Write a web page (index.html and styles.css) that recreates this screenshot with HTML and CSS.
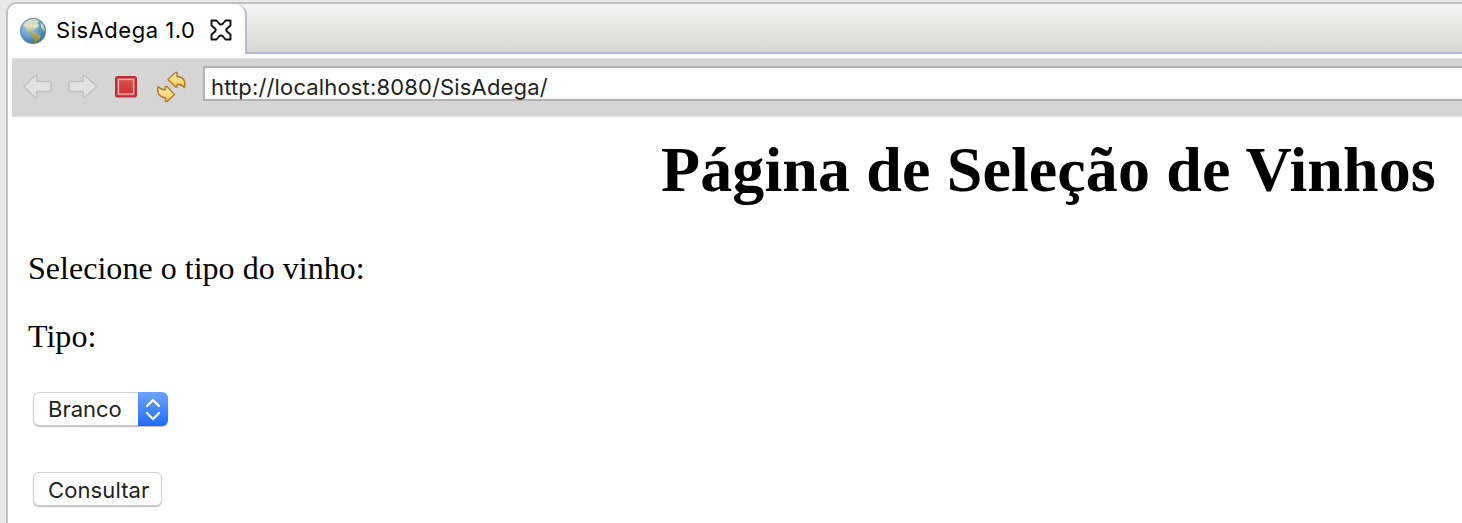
FILE: index.html
```
<!DOCTYPE html>
<html lang="pt-BR">
<head>
<meta charset="utf-8">
<title>SisAdega 1.0</title>
<link rel="stylesheet" href="styles.css">
</head>
<body>
<div class="window">
  <div class="tabs">
    <div class="tab">
      <svg class="globe" width="28" height="28" viewBox="0 0 28 28">
        <defs>
          <radialGradient id="sea" cx=".35" cy=".3" r=".75"><stop offset="0" stop-color="#b3d2e3"/><stop offset=".6" stop-color="#609cca"/><stop offset="1" stop-color="#38699c"/></radialGradient>
          <linearGradient id="land" x1="0" y1="0" x2="0" y2="1"><stop offset="0" stop-color="#d0d3b4"/><stop offset=".3" stop-color="#e4e5c8"/><stop offset=".55" stop-color="#b4b472"/><stop offset="1" stop-color="#877c35"/></linearGradient>
        </defs>
        <circle cx="14" cy="14" r="12.7" fill="url(#sea)" stroke="#557ea5" stroke-width=".7"/>
        <path d="M5.500 6C8 3 12 1.500 16 2L20 4 18 6 20 8 18 11 15 12 14.500 14 12 13 11 14 13 16 15 15 19 17 22 19 21 22 18 24 17 26 15 26 15 22 12 19 12 17 9 14 7 10 4.500 9ZM21 5L24 8 26 13 25 14 23 12 22 8Z" fill="url(#land)"/>
      </svg>
      <span class="tab-title">SisAdega 1.0</span>
      <svg class="close" width="22" height="22" viewBox="0 0 22 22"><path d="M1.500 1.500H6.500L9 4.500Q11 6.500 13 4.500L15.500 1.500H20.500V6.500L17 9.500Q15.500 11 17 12.500L20.500 15.500V20.500H15.500L13 17.500Q11 15.500 9 17.500L6.500 20.500H1.500V15.500L5 12.500Q6.500 11 5 9.500L1.500 6.500Z" fill="#fff" stroke="#111" stroke-width="1.900" stroke-linejoin="round"/></svg>
    </div>
    <div class="tab-rest"></div>
  </div>
  <div class="toolbar">
    <svg class="tools" width="191" height="59" viewBox="12 58 191 59">
      <defs>
        <linearGradient id="gold" x1="0" y1="0" x2="0" y2="1"><stop offset="0" stop-color="#fff1b8"/><stop offset="1" stop-color="#f5c653"/></linearGradient>
        <linearGradient id="red" x1="0" y1="0" x2="0" y2="1"><stop offset="0" stop-color="#d9504f"/><stop offset="1" stop-color="#ca3337"/></linearGradient>
      </defs>
      <g fill="#e1e1e1" stroke="#c2c2c2" stroke-width="1.6" stroke-linejoin="round">
        <path d="M24 86.5L35 75.5H37V81.5H50Q51 81.5 51 82.5V90.5Q51 91.5 50 91.5H37V97.5H35Z"/>
        <path d="M96.500 86.500L85 75.500H83V81.500H70Q69 81.500 69 82.500V90.500Q69 91.500 70 91.500H83V97.500H85Z"/>
      </g>
      <rect x="116" y="77" width="20" height="19.500" rx="1.800" fill="#d8595c" stroke="#b92d34" stroke-width="2"/>
      <rect x="118.500" y="79.500" width="15" height="14.500" fill="url(#red)" stroke="#f0b4b3" stroke-width="1.200"/>
      <g fill="url(#gold)" stroke="#b57f2e" stroke-width="1.500" stroke-linejoin="round">
        <path d="M168 79.500L175.500 72.500H177V76.500C183 77 186 80.500 184.500 87.500C182.500 85 180 84 177 84.500V87H175.500Z"/>
        <path d="M174.500 94.500L167 101.500H165.500V98C159.500 97 156.500 93 158 86.500C160 89 162.500 90 165.500 89.500V86.500H167Z"/>
      </g>
    </svg>
    <div class="address">http://localhost:8080/SisAdega/</div>
  </div>
  <main class="page">
    <h1>Página de Seleção de Vinhos</h1>
    <p>Selecione o tipo do vinho:</p>
    <p>Tipo:</p>
    <div class="select"><span class="select-value">Branco</span><span class="stepper"><svg width="30" height="35" viewBox="0 0 30 35"><path d="M9 14L15 8 21 14M9 21L15 27 21 21" fill="none" stroke="#fff" stroke-width="2.300" stroke-linecap="round" stroke-linejoin="round"/></svg></span></div>
    <button class="submit">Consultar</button>
  </main>
</div>
</body>
</html>
```
FILE: styles.css
```
* { box-sizing: border-box; }
body {
  margin: 0;
  height: 523px;
  padding: 2px 0 0 6px;
  overflow: hidden;
  background: #e8e8e8;
  color: #000;
}
.window {
  height: 521px;
  border: solid #c1c1be;
  border-width: 2px 0 0 2px;
  border-top-left-radius: 11px;
  background: #fff;
  overflow: hidden;
}
.tabs {
  display: flex;
  height: 50px;
  background: linear-gradient(#f4f4f4, #d6d6d4);
}
.tab {
  display: flex;
  align-items: center;
  width: 239px;
  padding: 3px 0 0 11px;
  background: #fff;
  border-right: 2px solid #b7bdcf;
  border-top-right-radius: 11px;
}
.tab-title {
  width: 141px;
  margin: -1px 0 0 9px;
  font: 22px/26px Inter, sans-serif;
  letter-spacing: 0.52px;
  white-space: nowrap;
}
.close { margin: -2px 0 0 12.5px; }
.tab-rest {
  flex: 1;
  border-bottom: 2px solid #b3bacb;
}
.toolbar {
  display: flex;
  height: 59px;
  margin: 4px 0 0 4px;
  background: #d5d5d5;
  border: solid #dedede;
  border-width: 1px 0;
}
.tools { flex: none; margin-top: -1px; }
.address {
  flex: 1;
  height: 35px;
  margin-top: 7px;
  padding-left: 6px;
  background: #fff;
  border: solid #b3b3b3;
  border-width: 2px 0 2px 2px;
  color: #222;
  font: 22px/38px Inter, sans-serif;
  letter-spacing: 0.15px;
  white-space: nowrap;
}
.page {
  padding: 16px 0 0 20px;
  font-family: "Liberation Serif", serif;
}
.page h1 {
  margin: 0 0 43px 633px;
  font-size: 64px;
  line-height: 74px;
  letter-spacing: 0.12px;
  white-space: nowrap;
}
.page p {
  margin: 0 0 31px;
  font-size: 32px;
  line-height: 37px;
  letter-spacing: 0.03px;
}
.select {
  display: flex;
  width: 135px;
  height: 34px;
  margin: 37px 0 0 5px;
  border-radius: 6px;
  background: #fff;
  box-shadow: inset 0 0 0 1px #cfcfcf, 0 1px 1px #bbb;
  overflow: hidden;
}
.select-value {
  width: 105px;
  padding-left: 15px;
  color: #222;
  font: 22px/35px Inter, sans-serif;
}
.stepper {
  width: 30px;
  height: 35px;
  background: linear-gradient(#6da5f7, #1e68f6);
}
.submit {
  display: block;
  width: 129px;
  height: 34px;
  margin: 46px 0 0 5px;
  padding: 0 0 0 14px;
  border: 1px solid #cfcfcf;
  border-radius: 6px;
  background: #fff;
  box-shadow: 0 1px 1px #bbb;
  color: #222;
  font: 22px/34px Inter, sans-serif;
  letter-spacing: 0.1px;
  text-align: left;
}
```
